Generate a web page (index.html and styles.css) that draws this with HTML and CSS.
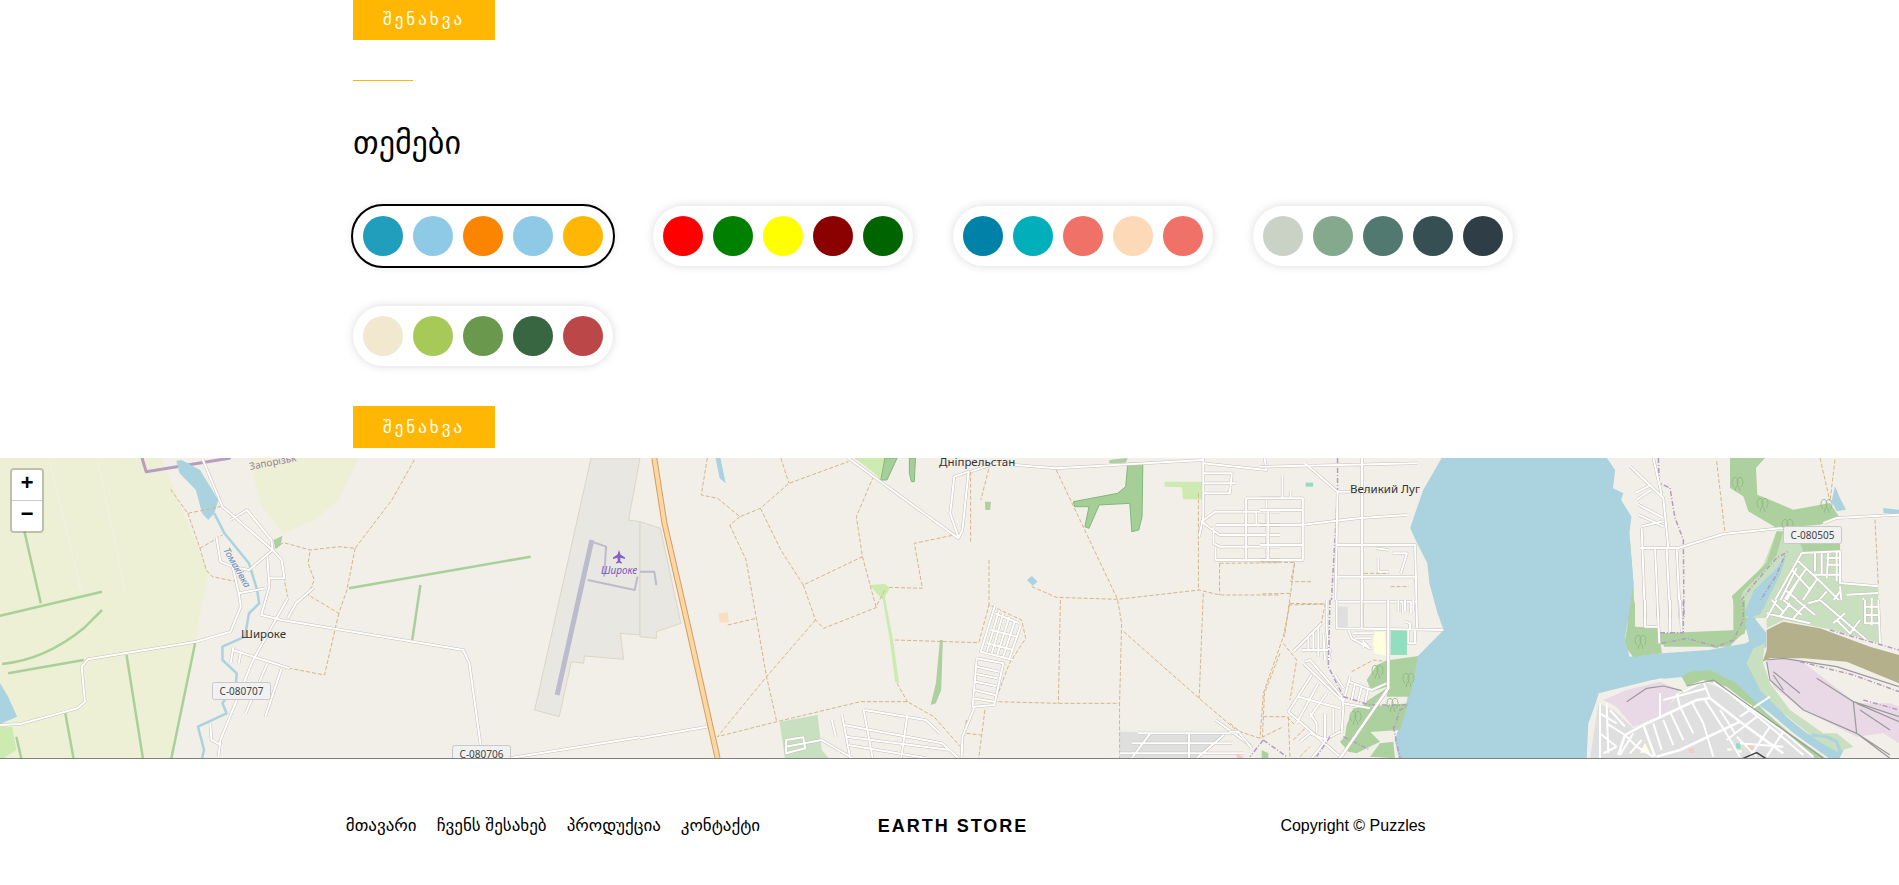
FILE: index.html
```html
<!DOCTYPE html>
<html lang="en">
<head>
    <meta charset="UTF-8">
    <meta name="viewport" content="width=device-width, initial-scale=1.0">
    <title>Earth Store</title>
    <link rel="stylesheet" href="styles.css">
</head>
<body>
    <section class="settings">
        <a class="btn" href="#">შენახვა</a>
        <div class="rule"></div>
        <h2>თემები</h2>

        <div class="themes">
            <div class="theme selected">
                <span class="dot c1a"></span><span class="dot c1b"></span><span class="dot c1c"></span><span class="dot c1b"></span><span class="dot c1d"></span>
            </div>
            <div class="theme">
                <span class="dot c2a"></span><span class="dot c2b"></span><span class="dot c2c"></span><span class="dot c2d"></span><span class="dot c2e"></span>
            </div>
            <div class="theme">
                <span class="dot c3a"></span><span class="dot c3b"></span><span class="dot c3c"></span><span class="dot c3d"></span><span class="dot c3c"></span>
            </div>
            <div class="theme">
                <span class="dot c4a"></span><span class="dot c4b"></span><span class="dot c4c"></span><span class="dot c4d"></span><span class="dot c4e"></span>
            </div>
            <div class="theme">
                <span class="dot c5a"></span><span class="dot c5b"></span><span class="dot c5c"></span><span class="dot c5d"></span><span class="dot c5e"></span>
            </div>
        </div>

        <a class="btn" href="#">შენახვა</a>
    </section>

    <div class="map">
        <svg class="map-art" width="1899" height="300" viewBox="0 0 1899 300">
            <defs>
                <g id="roads-a">
                    <path d="M495 24 L545 170 L668 300 L690 330 L697 385 L660 385"/>
                    <path d="M565 210 L605 180 L665 270 L668 300 L610 360 L570 350 L540 335 L530 260"/>
                    <path d="M655 320 L660 410 L640 495 L690 510 L1135 600 L1150 640 L1178 890"/>
                    <path d="M570 350 L585 430 L590 470 L565 545 L480 575 L215 628 L200 650 L208 755 L190 775 L50 822 L0 825"/>
                    <path d="M585 430 L650 415"/>
                    <path d="M770 412 L725 460 L705 505"/>
                    <path d="M705 445 L620 630 L540 870 L535 924"/>
                    <path d="M570 600 L710 655"/>
                    <path d="M690 655 L650 800"/>
                    <path d="M655 640 L602 790"/>
                    <path d="M572 590 L565 640 M590 605 L585 640"/>
                    <path d="M515 820 L518 870 L540 885"/>
                    <path d="M1250 924 L1568 862"/>
                </g>
                <g id="roads-b">
                    <path d="M510 24 L780 265 L790 240 L805 65 L770 80 L760 190 L780 262"/>
                    <path d="M810 65 L870 40 L1020 55 L1380 30"/>
                    <path d="M0 865 L165 830"/>
                    <path d="M1380 24 L1380 200 L1370 260 M1380 40 L1535 60 L1530 24 M1380 70 L1450 70 L1445 130 L1380 130 M1380 100 L1460 100"/>
                    <path d="M1375 215 L1420 255 L1568 255 M1375 215 L1410 185 L1568 185 M1485 145 L1568 145 M1485 145 L1485 330 M1535 145 L1535 330 M1510 185 L1510 225 M1410 225 L1568 225 M1405 230 L1405 280 L1420 290 L1568 290 M1410 290 L1410 330 L1568 330"/>
                    <path d="M870 465 L835 605 L915 630 M880 480 L850 605 M890 490 L862 610 M905 500 L875 615 M918 515 L890 620 M932 530 L905 625 M870 490 L930 520 M860 540 L925 560 M850 580 L915 600"/>
                    <path d="M825 625 L890 640 L868 765 L815 770 L825 625 M825 650 L880 665 M825 672 L875 685 M822 695 L872 708 M820 720 L870 735 M815 745 L868 755"/>
                    <path d="M820 770 L790 860 L788 924"/>
                    <path d="M550 780 L700 810 L735 850 M548 780 L570 924 M655 795 L640 924 M500 825 L740 880 L780 924 M505 860 L760 900 M510 885 L700 924 M495 795 L515 924 M470 810 L480 860"/>
                    <path d="M358 870 L400 862 L405 895 L358 910 Z M358 890 L445 870 L520 924"/>
                    <path d="M1410 810 L1500 890 M1220 850 L1470 850 M1205 880 L1450 880 M1175 910 L1480 910 M1250 850 L1205 924 M1345 850 L1345 924 M1430 855 L1365 924"/>
                </g>
                <g id="roads-c">
                    <path d="M0 50 L385 40 M250 24 L250 540 M110 40 L190 125 L315 125"/>
                    <path d="M0 145 L105 145 L105 330 L0 330 M0 180 L105 180 M0 225 L105 225 M0 285 L105 285 M20 180 L20 330 M55 75 L55 145 M75 120 L75 145 M100 225 L240 205 L360 195"/>
                    <path d="M190 120 L185 455 M185 285 L380 285 L385 540 M185 380 L385 380 M185 455 L385 455 M285 295 L315 300 M290 325 L290 365 L315 365 M325 310 L360 310 L345 370 M350 455 L350 490 M370 455 L370 490"/>
                </g>
                <!-- the next three use true 3x crops of the reference -->
                <g id="roads-ne">
                    <path d="M60 270 L175 270 L310 228 L490 210 M610 195 L650 180 L837 170"/>
                    <path d="M30 25 L130 120 L145 270 M100 0 L125 110 M65 210 L75 480 M105 270 L115 480 M140 270 L150 480 M170 270 L180 480 M45 105 L95 80 M55 140 L130 180 M55 170 L130 205 M65 205 L130 190 M50 125 L95 95"/>
                    <path d="M545 285 L660 280 L660 375 L775 385 M585 285 L585 340 M605 285 L605 350 M625 285 L620 360 M650 280 L650 370 M620 300 L660 300 M620 320 L660 320 M580 350 L660 350"/>
                    <path d="M535 310 L600 370 L710 480 M515 335 L570 395 M495 395 L550 440 M450 430 L500 480 M545 285 L440 470 M560 330 L490 430 M590 365 L520 470 M620 400 L560 470 M660 400 L610 470 M660 385 L670 480 M680 410 L775 405 M730 420 L740 480 M755 420 L765 480 M530 330 L470 450 M545 350 L480 460 M575 385 L540 440"/>
                </g>
                <g id="roads-sw">
                    <path d="M320 0 L320 85 L640 90 M395 0 L395 85 M355 90 L365 115 L420 145 L400 125 M370 100 L430 100 M375 115 L425 115 M400 120 L400 145 M535 90 L535 130 L560 130 M555 90 L555 130 M525 65 L540 70 L540 90 M505 0 L505 35 M525 0 L525 35 M550 0 L550 35"/>
                    <path d="M290 0 L290 85 L300 185 M215 150 L300 150 L295 185 M275 70 L190 155 M235 115 L235 150 M250 100 L250 150 M265 80 L265 170 M280 100 L285 180"/>
                    <path d="M225 185 L240 180 L335 290 L340 320 L335 400 M220 190 L340 305 M245 225 L175 335 M265 250 L200 370 M290 280 L240 350 M175 335 L330 470 M205 290 L330 325 M240 340 L260 370 L260 400 M285 340 L285 420 L330 395 M310 330 L310 400"/>
                    <path d="M340 310 L420 325 M315 225 L340 265 M360 230 L340 305 M355 245 L425 270 L470 250 M375 250 L365 300 M395 260 L385 300 M415 265 L405 310 M210 425 L240 400 L290 420 L245 475"/>
                    <path d="M0 395 L25 395 L65 445"/>
                </g>
                <g id="roads-se">
                    <path d="M90 310 L90 475 M110 310 L115 460 M90 340 L140 370 M110 370 L165 405 M120 330 L165 380 M90 400 L140 440 M165 405 L200 440 L250 470 M190 400 L150 465 M215 420 L180 460 M100 460 L140 440"/>
                    <path d="M270 350 L270 280 M340 275 L400 245 M320 280 L330 320 M280 300 L410 265 M400 245 L420 295"/>
                    <path d="M300 335 L340 420 M330 320 L370 400 M365 305 L400 370 M405 300 L460 385 M450 330 L495 400 M250 370 L275 450 M280 360 L310 435"/>
                    <path d="M460 265 L600 380 L700 465 M430 245 L640 395 L730 470 M510 350 L600 290 M545 320 L470 270 M500 410 L560 470 M600 380 L540 470 M560 350 L470 420 M640 395 L590 470 M460 385 L510 470 M400 370 L430 470 M510 430 L640 440"/>
                </g>
                <g id="roads-port">
                    <path d="M225 0 L225 80 L262 80 M262 0 L268 130 M300 0 L300 95 M330 0 L335 95"/>
                    <path d="M590 40 L720 70 M605 0 L640 35 M640 0 L695 45 M680 0 L735 45 M590 55 L620 0 M630 50 L660 10 M670 55 L705 15 M715 10 L750 0 M800 60 L840 100 M790 70 L825 40 M840 100 L870 60 M750 0 L890 120 M885 0 L885 70 L925 70 M905 0 L905 75 M925 0 L930 130 M885 20 L925 20 M885 45 L925 45"/>
                </g>
                <path id="tree" d="M-4 3 A3 5 0 1 1 -2 3 L-3 7 M3 3 A3 5 0 1 0 1 3 L2 7"/>
            </defs>

            <rect class="land" width="1899" height="300"/>

            <!-- west part, drawn in the crop units of that part -->
            <g transform="translate(0 -8) scale(.40816 .33333)">
                <path class="farm" d="M0 24 L395 24 L510 370 L480 570 L420 924 L0 924 Z"/>
                <path class="farm" d="M610 24 L880 24 L830 150 L770 210 L695 250 L640 170 Z"/>
                <path class="fade" d="M120 24 L200 430 M238 24 L305 410"/>
                <path class="hedge" d="M60 245 L100 460 M0 497 L250 425 M310 615 L350 924 M478 580 L420 924 M160 790 L180 924 M40 860 L52 924 M20 670 L205 630 M855 415 L1300 320 M1030 405 L1010 570 M5 642 Q110 630 205 535 L250 480"/>
                <path class="meadow" d="M0 830 L30 830 L40 900 L10 924 L0 924 Z"/>
                <path class="wood" d="M670 270 L692 257 L688 285 L675 298 Z"/>
                <path class="border" d="M348 24 L358 65 L565 24"/>
                <path class="water" d="M432 32 L445 30 L490 60 L535 150 L525 190 L510 210 L495 190 L480 120 L440 70 Z"/>
                <path class="water" d="M0 700 L20 740 L42 800 L0 822 Z"/>
                <path class="river" d="M525 190 L550 250 L610 340 L630 420 L635 460 L610 490 L600 560 L545 590 L545 630 L580 670 L578 700 L545 760 L555 790 L485 830 L500 900 L495 924"/>
                <path class="track" d="M1015 30 L960 150 L870 295 L830 290 L760 300 L695 278 L670 295 M870 295 L850 420 L830 490 L755 435 L770 390 L755 340 L760 300 M830 490 L795 675 L710 655 M418 118 L460 190 L540 170 M460 190 L490 295 L505 360 L520 380 L580 395 M490 295 L545 255 M695 380 L705 440"/>
                <use href="#roads-a" class="casing"/>
                <use href="#roads-a" class="road"/>
                <path class="apron" d="M1448 24 L1310 780 L1370 800 L1400 635 L1430 640 L1432 618 L1528 628 L1520 550 L1568 555 L1568 215 L1540 210 L1568 24 Z"/>
                <path class="runway" d="M1450 270 L1365 735"/>
                <path class="taxi" d="M1450 275 L1485 290 L1480 380 M1440 390 L1555 420 L1562 380"/>
            </g>

            <!-- middle part -->
            <g transform="translate(640 -8) scale(.40816 .33333)">
                <path class="apron" d="M0 215 L50 235 L100 520 L40 545 L40 565 L0 560 Z"/>
                <path class="taxi" d="M0 365 L35 365 L40 405"/>
                <path class="meadow" d="M525 24 L600 24 L590 90 L575 70 Z"/>
                <path class="wood-dark" d="M600 24 L630 24 L605 90 L590 90 Z"/>
                <path class="wood-dark" d="M660 24 L675 24 L672 95 L665 95 L660 70 Z"/>
                <path class="wood-dark" d="M1195 40 L1232 40 L1230 200 L1222 240 L1205 245 L1200 160 L1125 165 L1100 235 L1090 230 L1100 170 L1065 170 L1062 155 L1170 130 L1190 110 Z"/>
                <path class="meadow" d="M1285 95 L1378 95 L1378 148 L1330 148 L1328 112 L1285 110 Z"/>
                <path class="wood" d="M845 155 L860 155 L858 180 L846 180 Z"/>
                <path class="wood" d="M1150 30 L1195 24 L1190 38 L1150 40 Z"/>
                <path class="water" d="M948 390 L960 378 L974 395 L962 407 Z"/>
                <path class="water" d="M185 24 L197 24 L210 100 L195 85 Z"/>
                <path class="beige" d="M193 490 L215 487 L218 517 L195 518 Z"/>
                <path class="meadow" d="M562 405 L600 402 L612 415 L600 440 L620 570 L635 700 L625 695 L612 570 L595 450 Z"/>
                <path class="wood" d="M735 570 L742 570 L738 720 L725 760 L712 765 L725 700 Z"/>
                <path class="meadow-soft" d="M342 815 L435 795 L445 900 L462 924 L355 924 Z"/>
                <path class="grey" d="M1175 845 L1440 850 L1370 924 L1175 924 Z"/>
                <path class="track" d="M165 24 L150 135 L190 145 L245 200 L295 175 L365 100 L510 35 M345 24 L365 100 M295 175 L345 300 L400 405 L545 320 L530 200 L570 85 M400 405 L430 510 L450 535 L580 472 M220 225 L260 330 L285 505 L310 680 L335 815 M245 200 L220 225 M215 525 L285 505 M430 510 L310 680 L190 860 L335 815 L540 755 L655 755 L720 800 L785 890 M545 320 L578 470 L600 420 M610 412 L692 415 L672 280 L770 255 M855 330 L855 465 L935 510 L945 565 L905 640 L870 755 L1025 760 L1175 760 L1175 924 M625 570 L830 578 L855 465 M630 700 L655 755 M1030 450 L1025 760 M960 410 L1020 442 L1170 448 L1370 420 L1420 435 L1568 435 M1020 60 L1170 448 L1180 520 L1175 760 M1185 545 L1370 745 L1470 850 M1368 130 L1368 420 M1420 340 L1568 338 M1420 340 L1420 435 M1380 430 L1370 745 M1568 610 L1530 730 L1525 860 M810 65 L810 280 M858 40 L835 150 M800 810 L790 880 M845 780 L830 924 M800 850 L835 855"/>
                <use href="#roads-b" class="casing"/>
                <use href="#roads-b" class="road"/>
                <path class="trunk-edge" d="M35 24 L60 220 L120 540 L190 924"/>
                <path class="trunk" d="M35 24 L60 220 L120 540 L190 924"/>
            </g>

            <!-- east part, the lake and the upper town -->
            <g transform="translate(1260 -8) scale(.40816 .33333)">
                <path class="wood" d="M905 250 L915 400 L918 530 L975 535 L985 610 L915 622 L895 590 L900 540 Z"/>
                <path class="wood" d="M980 550 L1170 540 L1158 440 L1250 340 L1270 290 L1300 290 L1240 480 L1210 510 L1190 540 L1150 590 L990 590 Z"/>
                <path class="water" d="M445 24 L850 24 L870 60 L865 115 L890 130 L885 150 L910 200 L905 250 L915 400 L895 560 L905 620 L985 610 L1100 600 L1190 580 L1240 545 L1240 590 L1192 640 L1240 730 L1290 800 L1340 850 L1430 900 L1420 924 L1380 924 L1250 790 L1110 665 L1040 680 L960 690 L830 730 L805 830 L808 924 L340 924 L330 870 L350 800 L370 700 L385 620 L450 540 L435 490 L415 400 L410 340 L385 280 L368 235 L380 190 L400 120 Z"/>
                <path class="mint" d="M320 540 L360 540 L360 615 L320 615 Z"/>
                <path class="mint" d="M112 98 L130 98 L130 110 L112 110 Z"/>
                <path class="pale" d="M280 545 L305 545 L310 618 L280 610 L278 580 Z"/>
                <path class="grey" d="M188 470 L215 470 L215 535 L188 535 Z"/>
                <path class="track" d="M0 335 L85 338 L75 430 L0 432 M85 338 L75 395 L125 395 M70 465 L160 462 L150 520 L95 590 M75 430 L60 560 M255 370 L315 370 M320 410 L365 410"/>
                <path class="border-thin" d="M190 24 L190 130 L175 450"/>
                <use href="#roads-c" class="casing"/>
                <use href="#roads-c" class="road"/>
            </g>

            <!-- town by the western shore -->
            <g transform="translate(1230 142) scale(.33333)">
                <path class="wood" d="M410 240 L440 195 L475 180 L470 260 L425 275 Z"/>
                <path class="wood" d="M480 180 L565 168 L540 290 L470 290 L475 270 Z"/>
                <path class="wood" d="M400 310 L470 265 L430 318 L400 325 Z"/>
                <path class="wood" d="M350 375 L370 325 L420 320 L535 310 L510 390 L430 395 L390 400 L345 410 Z"/>
                <path class="wood" d="M330 425 L350 405 L415 390 L450 425 L380 460 L355 455 Z"/>
                <path class="wood" d="M420 470 L450 430 L490 425 L495 475 Z"/>
                <path class="wood" d="M95 450 L115 460 L115 475 L95 475 Z"/>
                <path class="beige-pink" d="M20 460 L45 475 L20 475 Z"/>
                <path class="track" d="M180 10 L285 12 M180 10 L160 110 L100 280 L90 415 M160 130 L200 180 L180 300 M100 350 L170 350 L195 375 M175 350 L180 475 M365 215 L430 180 L470 185 M0 370 L30 395 L90 415 L160 380 M210 470 L240 440 M190 420 L230 380"/>
                <use href="#roads-sw" class="casing"/>
                <use href="#roads-sw" class="road"/>
                <path class="border-thin" d="M300 0 L295 200 L340 290 L420 315 L535 315 M490 390 L510 330 L530 320 M490 380 L510 475 M340 410 L420 450 M100 420 L170 470 M300 410 L260 470 M100 420 L60 470"/>
                <path class="main-edge" d="M475 0 L475 265 L330 475"/>
                <path class="main-road" d="M475 0 L475 265 L330 475"/>
            </g>

            <!-- north east, the settlement under the C-080505 road -->
            <g transform="translate(1620 0) scale(.33333)">
                <path class="wood" d="M330 0 L435 0 L408 30 L412 110 L520 155 L630 135 L660 180 L600 200 L470 210 L385 160 L370 115 L330 90 Z"/>
                <path class="meadow-soft" d="M340 480 L345 430 L430 320 L470 220 L660 250 L660 370 L775 385 L775 480 Z"/>
                <path class="wood" d="M335 415 L440 315 L470 220 L490 220 L470 290 L440 330 L370 400 L350 450 Z"/>
                <path class="wood" d="M540 255 L660 250 L660 278 L550 282 Z"/>
                <path class="water" d="M420 470 L368 478 L400 400 L470 330 L500 290 L480 350 Z"/>
                <path class="water" d="M645 85 L660 120 L678 155 L650 160 L635 130 Z"/>
                <path class="water" d="M790 150 L837 155 L837 170 L790 165 Z"/>
                <path class="track" d="M290 10 L315 225 M600 0 L630 130 M645 5 L630 130 M765 185 L775 380"/>
                <path class="border-thin" d="M115 0 L118 75 L150 90 L165 180 L190 245 L192 480 M345 450 L400 380 L470 300 L505 280 M395 470 L470 350 L495 290"/>
                <use href="#roads-ne" class="casing"/>
                <use href="#roads-ne" class="road"/>
            </g>

            <!-- south east, the city and the port -->
            <g transform="translate(1570 142) scale(.33333)">
                <path class="wood" d="M170 90 L195 0 L195 80 L265 85 L270 155 L190 172 L165 130 Z"/>
                <path class="wood" d="M490 0 L525 0 L525 100 L440 145 L330 120 L272 135 L270 105 L490 95 Z"/>
                <path class="meadow-soft" d="M590 0 L930 0 L930 130 L790 90 L640 60 L590 85 Z"/>
                <path class="water" d="M525 70 L562 0 L590 0 L582 25 L550 50 L590 100 L540 135 Z"/>
                <path class="meadow-soft" d="M530 190 L550 145 L585 130 L578 185 L600 250 L660 330 L760 400 L800 400 L850 440 L800 455 L740 420 L640 340 L570 270 Z"/>
                <path class="land" d="M50 477 L55 370 L85 290 L180 265 L270 235 L320 240 L350 258 L400 240 L600 350 L780 477 Z"/>
                <path class="wood" d="M335 230 L360 215 L420 210 L500 250 L590 340 L660 400 L770 477 L720 477 L610 370 L470 260 L400 240 L350 258 Z"/>
                <path class="grey" d="M85 310 L130 330 L190 385 L270 345 L340 270 L400 245 L470 270 L740 477 L60 477 Z"/>
                <path class="pink" d="M100 300 L170 270 L270 245 L330 270 L270 350 L190 380 L140 320 Z"/>
                <path class="brown" d="M590 90 L640 65 L750 85 L900 140 L987 165 L987 250 L830 185 L700 175 L600 175 L578 185 L590 150 Z"/>
                <path class="land" d="M690 180 L830 190 L987 255 L987 320 L880 300 L820 280 Z"/>
                <path class="pink" d="M590 185 L610 175 L690 180 L820 280 L860 310 L960 310 L987 320 L987 430 L940 400 L860 410 L800 380 L700 330 L610 260 Z"/>
                <path class="water-line" d="M725 405 L770 410 L800 425 L810 452"/>
                <path class="mint" d="M498 430 L512 430 L512 446 L498 446 Z"/>
                <path class="beige-pink" d="M530 435 L550 435 L550 450 L530 450 Z M356 445 L372 445 L372 458 L356 458 Z"/>
                <path class="pale" d="M210 458 L225 428 L240 458 Z M472 445 L484 445 L484 452 L472 452 Z M505 450 L515 450 L515 458 L505 458 Z"/>
                <use href="#roads-port" class="casing"/>
                <use href="#roads-port" class="road"/>
                <use href="#roads-se" class="road"/>
                <path class="city-main" d="M145 465 L165 405 L220 375 L380 300 L420 295 L510 365 L640 460 M220 375 L255 470 M510 365 L330 450 L260 470"/>
                <path class="rail" d="M170 305 L230 265 L280 258 L335 272 M590 185 L600 240 L700 330 L860 400 L960 475 M610 215 L690 280 M610 225 L640 270 M740 235 L850 305 L860 400 L960 465 M850 305 L987 350 M860 310 L987 365 M870 330 L960 390 M590 180 L640 175 L800 200 L987 260 M350 258 L430 240 L760 475"/>
                <path class="border-thin" d="M690 185 L850 225 L987 275 M270 98 L340 98 L340 0 M275 130 L350 115 L440 140 L490 120 L520 60 L520 0 M880 300 L987 330 M780 90 L987 150"/>
                <path class="grey-road" d="M515 477 L560 458 L590 477"/>
            </g>

            <path class="plane" d="M619 92 L620.5 96.5 L625 99.5 L625 101 L620.5 99.7 L620.2 103 L622 104.5 L622 105.5 L619 104.7 L616 105.5 L616 104.5 L617.8 103 L617.5 99.7 L613 101 L613 99.5 L617.5 96.5 Z"/>

            <use href="#tree" class="trees" x="1641" y="184"/>
            <use href="#tree" class="trees" x="1738" y="26"/>
            <use href="#tree" class="trees" x="1763" y="47"/>
            <use href="#tree" class="trees" x="1378" y="214"/>
            <use href="#tree" class="trees" x="1409" y="222"/>
            <use href="#tree" class="trees" x="1393" y="247"/>
            <use href="#tree" class="trees" x="1356" y="260"/>
            <use href="#tree" class="trees" x="1827" y="48"/>
            <use href="#tree" class="trees" x="1788" y="68"/>

            <text class="label-district" transform="translate(250 12) rotate(-11)">Запорізьк</text>
            <text class="label-river" transform="translate(223 92) rotate(60)">Томаківка</text>
            <text class="label-airport" x="601" y="116">Широке</text>
            <text class="label-place" x="241" y="180">Широке</text>
            <text class="label-place" x="939" y="8">Дніпрельстан</text>
            <text class="label-place" x="1350" y="35">Великий Луг</text>

            <g class="shield">
                <rect x="212.500" y="224.500" width="58" height="17" rx="2"/>
                <text x="241.500" y="237">C-080707</text>
                <rect x="452.500" y="287.500" width="58" height="17" rx="2"/>
                <text x="481.500" y="300">C-080706</text>
                <rect x="1783.500" y="68.500" width="58" height="17" rx="2"/>
                <text x="1812.500" y="81">C-080505</text>
            </g>
        </svg>

        <div class="zoom-bar">
            <a class="zoom-btn" href="#">+</a>
            <a class="zoom-btn" href="#">&minus;</a>
        </div>
    </div>

    <footer>
        <div class="footer-row">
            <nav class="footer-nav">
                <a href="#">მთავარი</a>
                <a href="#">ჩვენს შესახებ</a>
                <a href="#">პროდუქცია</a>
                <a href="#">კონტაქტი</a>
            </nav>
            <div class="brand">EARTH STORE</div>
            <div class="copyright">Copyright © Puzzles</div>
        </div>
    </footer>
</body>
</html>
```

FILE: styles.css
```css
body {
    margin: 0;
    font-family: 'Liberation Sans', 'DejaVu Sans', sans-serif;
    color: #000;
    background: #fff;
    overflow: hidden;
}

a {
    color: inherit;
    text-decoration: none;
}

/* the page is scrolled 2px down in the picture */
.settings {
    margin: -2px 0 10px 353px;
}

.btn {
    display: flex;
    align-items: center;
    justify-content: center;
    width: 142px;
    height: 42px;
    background: #ffb703;
    color: #fff;
    font-size: 17px;
    letter-spacing: 3px;
}

.rule {
    width: 60px;
    height: 1px;
    margin-top: 40px;
    background: #ffb703;
}

h2 {
    margin: 44px 0 45px;
    height: 36px;
    line-height: 36px;
    font-size: 32px;
    font-weight: 400;
}

.themes {
    display: flex;
    flex-wrap: wrap;
    gap: 40px;
    width: 1200px;
    margin-bottom: 40px;
}

.theme {
    display: flex;
    gap: 10px;
    padding: 10px;
    border-radius: 30px;
    background: #fff;
    box-shadow: 0 0 10px rgba(0, 0, 0, 0.15);
}

.theme.selected {
    outline: 2px solid #000;
}

.dot {
    width: 40px;
    height: 40px;
    border-radius: 50%;
}

.c1a { background: #219ebc; }
.c1b { background: #8ecae6; }
.c1c { background: #fb8500; }
.c1d { background: #ffb703; }
.c2a { background: #ff0000; }
.c2b { background: #008000; }
.c2c { background: #ffff00; }
.c2d { background: #8b0000; }
.c2e { background: #006400; }
.c3a { background: #0081a7; }
.c3b { background: #00afb9; }
.c3c { background: #f07167; }
.c3d { background: #fed9b7; }
.c4a { background: #cad2c5; }
.c4b { background: #84a98c; }
.c4c { background: #52796f; }
.c4d { background: #354f52; }
.c4e { background: #2f3e46; }
.c5a { background: #f2e8cf; }
.c5b { background: #a7c957; }
.c5c { background: #6a994e; }
.c5d { background: #386641; }
.c5e { background: #bc4749; }

.map {
    position: relative;
    height: 300px;
    overflow: hidden;
}

.map-art {
    display: block;
}

.map-art path {
    vector-effect: non-scaling-stroke;
    fill: none;
    stroke-linejoin: round;
}

.land,
.map-art .land { fill: #f2efe9; }
.map-art .farm { fill: #eef0d5; }
.map-art .meadow { fill: #cdebb0; }
.map-art .meadow-soft { fill: #c8dfc0; }
.map-art .wood { fill: #add19e; }
.map-art .wood-dark { fill: #a6ce97; stroke: #7fb97c; stroke-width: 1; }
.map-art .water { fill: #aad3df; }
.map-art .beige { fill: #f7dfc0; }
.map-art .grey { fill: #dfdfdf; }
.map-art .pink { fill: #e9d9e6; }
.map-art .brown { fill: #b5b08c; }
.map-art .mint { fill: #8fdfc0; }
.map-art .pale { fill: #ffffe0; }
.map-art .beige-pink { fill: #f8c9bd; }
.map-art .apron { fill: #e9e7e2; stroke: #dcd6c6; stroke-width: 1; }
.map-art .plane { fill: #8461c4; }

.map-art .fade { stroke: #f4f2e6; stroke-width: 1; }
.map-art .hedge { stroke: #a9d09b; stroke-width: 2.500; }
.map-art .border { stroke: #b99cc0; stroke-width: 3; }
.map-art .border-thin { stroke: #b39cc0; stroke-width: 1.500; stroke-dasharray: 5 2 1 2; }
.map-art .river { stroke: #aad3df; stroke-width: 2.500; }
.map-art .water-line { stroke: #aad3df; stroke-width: 3; }
.map-art .track { stroke: #d6b586; stroke-width: 1; stroke-dasharray: 4 2; }
.map-art .runway { stroke: #bbbbcc; stroke-width: 5; }
.map-art .taxi { stroke: #bbbbcc; stroke-width: 2; }
.map-art .trunk-edge { stroke: #d39f5c; stroke-width: 6; }
.map-art .trunk { stroke: #fcd6a4; stroke-width: 4; }
.map-art .main-edge { stroke: #bdb9b0; stroke-width: 3.500; }
.map-art .main-road { stroke: #fff; stroke-width: 2.500; }
.map-art .city-main { stroke: #fff; stroke-width: 2.500; }
.map-art .rail { stroke: #9a9a9a; stroke-width: 1.200; }
.map-art .grey-road { stroke: #444; stroke-width: 1.500; }
.map-art .trees { fill: none; stroke: #8bb583; stroke-width: 0.800; }

.casing { fill: none; stroke: #c4c0b8; stroke-width: 3; }
.road { fill: none; stroke: #fff; stroke-width: 2; }

.map-art text {
    font-family: 'Noto Sans', sans-serif;
}

.map-art .label-place { font-size: 11.500px; fill: #333; }
.map-art .label-airport { font-size: 10px; font-style: italic; fill: #7a55bd; }
.map-art .label-river { font-size: 9.500px; font-style: italic; fill: #5f8ec0; }
.map-art .label-district { font-size: 10px; fill: #9a7fa0; }

.shield rect { fill: #f1f1f1; stroke: #c9c9c9; }
.map-art .shield text { font-size: 10px; fill: #444; text-anchor: middle; }

.zoom-bar {
    position: absolute;
    top: 10px;
    left: 10px;
    border: 2px solid rgba(0, 0, 0, 0.2);
    border-radius: 4px;
    background-clip: padding-box;
}

.zoom-btn {
    display: block;
    width: 30px;
    height: 30px;
    background: #fff;
    color: #000;
    font: bold 22px/30px 'Liberation Mono', monospace;
    text-align: center;
}

.zoom-btn:first-child {
    border-bottom: 1px solid #ccc;
    border-radius: 2px 2px 0 0;
}

.zoom-btn:last-child {
    border-radius: 0 0 2px 2px;
}

footer {
    border-top: 1px solid #808080;
    padding: 58px 0 51px 353px;
}

.footer-row {
    display: grid;
    grid-template-columns: repeat(3, 400px);
    align-items: center;
    height: 18px;
    line-height: 18px;
    text-align: center;
}

.footer-nav {
    display: flex;
    justify-content: center;
    gap: 20px;
    font-size: 17px;
    white-space: nowrap;
}

.brand {
    font-size: 18px;
    font-weight: 700;
    letter-spacing: 2px;
}

.copyright {
    font-size: 16px;
}
```
